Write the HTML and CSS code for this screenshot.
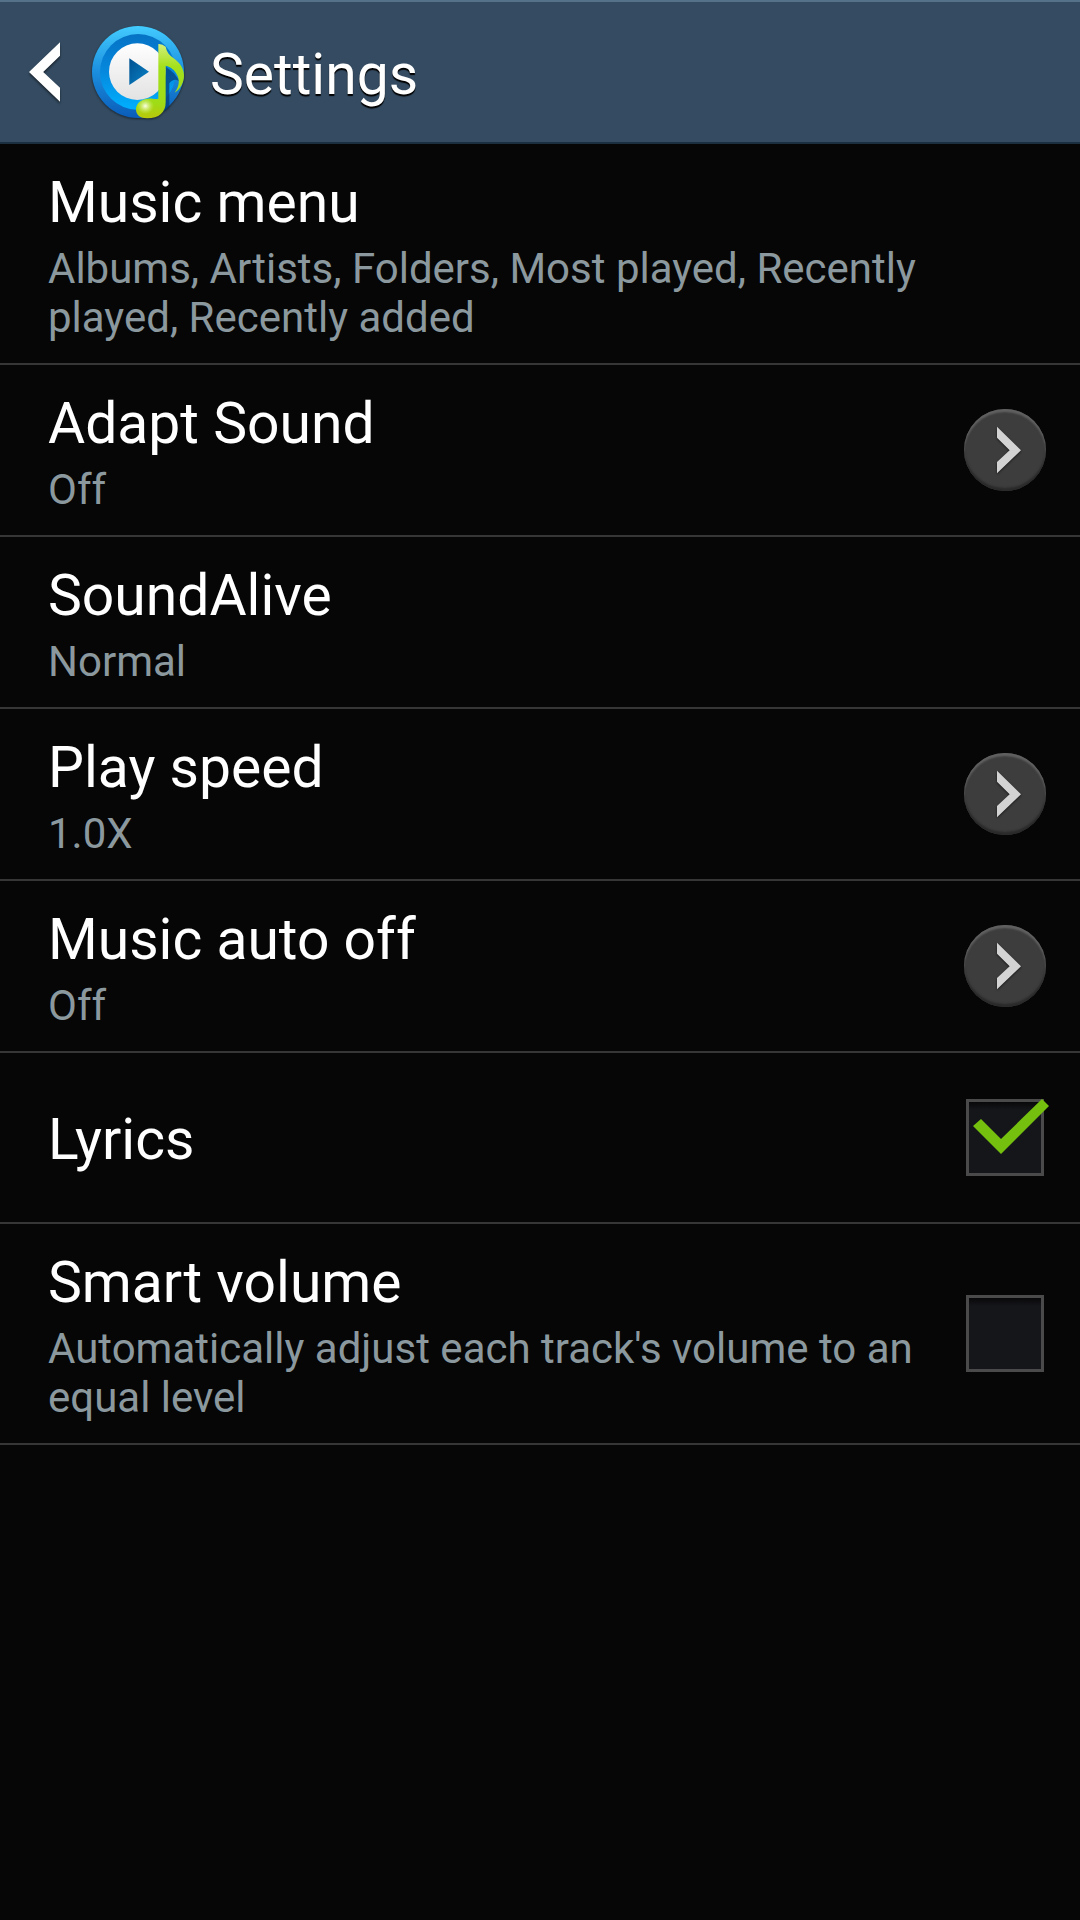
FILE: index.html
```html
<!DOCTYPE html>
<html lang="en">
<head>
    <meta charset="UTF-8">
    <meta name="viewport" content="width=device-width, initial-scale=1.0">
    <title>Settings</title>
    <link rel="stylesheet" href="styles.css">
</head>
<body>
    <svg class="sprite" aria-hidden="true">
        <symbol id="arrow" viewBox="0 0 246 246">
            <path d="M99 53L171 124L99 193V159L137 124L99 86Z"/>
        </symbol>
    </svg>

    <header class="action-bar">
        <a href="#" class="back" aria-label="Back">
            <svg class="back-icon" viewBox="0 0 94 180">
                <path d="M94 0V41L43 90L94 138V180L0 90Z" fill="#fff"/>
            </svg>
        </a>
        <svg class="app-icon" viewBox="0 0 276 279" aria-hidden="true">
            <defs>
                <linearGradient id="rim" x1="0" y1="0" x2="0" y2="1">
                    <stop offset="0" stop-color="#43ccff"/>
                    <stop offset="0.5" stop-color="#1b8ede"/>
                    <stop offset="1" stop-color="#0a5cb8"/>
                </linearGradient>
                <linearGradient id="ring" x1="0" y1="0" x2="0" y2="1">
                    <stop offset="0" stop-color="#0672c4"/>
                    <stop offset="0.5" stop-color="#0589de"/>
                    <stop offset="1" stop-color="#00b0ff"/>
                </linearGradient>
                <linearGradient id="disc" x1="0" y1="0" x2="0" y2="1">
                    <stop offset="0" stop-color="#fff"/>
                    <stop offset="1" stop-color="#e2e2e2"/>
                </linearGradient>
                <linearGradient id="play" x1="0" y1="0" x2="1" y2="1">
                    <stop offset="0" stop-color="#00508f"/>
                    <stop offset="1" stop-color="#0a84c8"/>
                </linearGradient>
                <linearGradient id="note" x1="0" y1="0" x2="0" y2="1">
                    <stop offset="0" stop-color="#d3f07a"/>
                    <stop offset="0.3" stop-color="#a5e01c"/>
                    <stop offset="0.8" stop-color="#9fdc16"/>
                    <stop offset="1" stop-color="#b9c60a"/>
                </linearGradient>
                <radialGradient id="shine">
                    <stop offset="0" stop-color="#fbffe8"/>
                    <stop offset="1" stop-color="#d8ef70" stop-opacity="0"/>
                </radialGradient>
            </defs>
            <circle cx="138" cy="138" r="138" fill="url(#rim)"/>
            <circle cx="138" cy="138" r="114" fill="url(#ring)"/>
            <circle cx="136" cy="137" r="85" fill="url(#disc)"/>
            <path d="M112 97L171 137L112 177Z" fill="url(#play)"/>
            <!-- shadow the note throws on the ring -->
            <path d="M221 122C240 134 254 148 262 166C252 158 240 160 232 172V240C228 248 222 252 214 256Z" fill="#04407c" opacity="0.75"/>
            <path d="M199 54Q211 53 221 62C224 78 232 88 245 97C266 112 276 130 276 149C276 170 264 190 248 200C262 180 264 162 255 146C248 132 236 122 221 119V229C221 260 201 277 166 277C144 277 132 267 132 250C132 230 154 216 181 218Q192 220 199 218Z" fill="url(#note)"/>
            <ellipse cx="160" cy="240" rx="26" ry="24" fill="url(#shine)"/>
        </svg>
        <h1 class="screen-title">Settings</h1>
    </header>

    <main>
        <ul class="settings">
            <li class="row">
                <div class="text">
                    <h2 class="title">Music menu</h2>
                    <p class="summary">Albums, Artists, Folders, Most played, Recently played, Recently added</p>
                </div>
            </li>
            <li class="row">
                <div class="text">
                    <h2 class="title">Adapt Sound</h2>
                    <p class="summary">Off</p>
                </div>
                <button type="button" class="more" aria-label="Adapt Sound options">
                    <svg class="more-icon"><use href="#arrow"/></svg>
                </button>
            </li>
            <li class="row">
                <div class="text">
                    <h2 class="title">SoundAlive</h2>
                    <p class="summary">Normal</p>
                </div>
            </li>
            <li class="row">
                <div class="text">
                    <h2 class="title">Play speed</h2>
                    <p class="summary">1.0X</p>
                </div>
                <button type="button" class="more" aria-label="Play speed options">
                    <svg class="more-icon"><use href="#arrow"/></svg>
                </button>
            </li>
            <li class="row">
                <div class="text">
                    <h2 class="title">Music auto off</h2>
                    <p class="summary">Off</p>
                </div>
                <button type="button" class="more" aria-label="Music auto off options">
                    <svg class="more-icon"><use href="#arrow"/></svg>
                </button>
            </li>
            <li class="row">
                <label class="text" for="lyrics">
                    <span class="title">Lyrics</span>
                </label>
                <input type="checkbox" class="check" id="lyrics" checked>
            </li>
            <li class="row">
                <label class="text" for="smartVolume">
                    <span class="title">Smart volume</span>
                    <span class="summary">Automatically adjust each track's volume to an equal level</span>
                </label>
                <input type="checkbox" class="check" id="smartVolume">
            </li>
        </ul>
    </main>
</body>
</html>
```
FILE: styles.css
```css
* {
    box-sizing: border-box;
}

body {
    margin: 0;
    min-height: 100vh;
    background: #060606;
    color: #fff;
    font-family: Roboto, "Noto Sans", sans-serif;
}

.sprite {
    display: none;
}

/* Action bar */
.action-bar {
    display: flex;
    align-items: center;
    height: 144px;
    padding-left: 29px;
    background: #344b61;
    border-top: 2px solid #55728a;
    border-bottom: 2px solid #1c2f40;
}

.back {
    display: flex;
    margin-right: 32px;
}

.back-icon {
    width: 31px;
    height: 60px;
    filter: drop-shadow(0 2px 1px rgba(0, 0, 0, 0.5));
}

.app-icon {
    width: 92px;
    height: 93px;
    margin-right: 26px;
    filter: drop-shadow(0 1px 1px rgba(0, 0, 0, 0.5));
}

.screen-title {
    margin: 0;
    padding-top: 4px;
    font-size: 57px;
    font-weight: 400;
    line-height: 67px;
    text-shadow: 0 2px 1px #000;
}

/* Settings list */
.settings {
    list-style: none;
    margin: 0;
    padding: 0;
}

.row {
    display: flex;
    align-items: center;
    justify-content: space-between;
    gap: 24px;
    min-height: 171px;
    padding: 0 34px 0 48px;
    border-bottom: 2px solid #363636;
}

.text {
    flex: 1;
    padding: 25px 0 21px;
}

.title {
    display: block;
    margin: 0;
    font-size: 57px;
    font-weight: 400;
    line-height: 67px;
}

.summary {
    display: block;
    margin: 8px 0 0;
    color: #8b999f;
    font-size: 42px;
    line-height: 49px;
}

.more {
    width: 82px;
    height: 82px;
    padding: 0;
    border: none;
    border-radius: 50%;
    background: #3d3d3d;
    box-shadow: inset 0 3px 2px #616161, inset 0 -3px 2px #2a2a2a;
    cursor: pointer;
}

.more-icon {
    display: block;
    width: 82px;
    height: 82px;
    fill: #d3d3d3;
    filter: drop-shadow(0 1px 1px rgba(0, 0, 0, 0.6));
}

.check {
    appearance: none;
    position: relative;
    width: 78px;
    height: 77px;
    margin: 0 2px;
    border: 3px solid #4a4a4a;
    background: linear-gradient(#08080a, #15161a 8px);
    cursor: pointer;
}

/* Tick runs past the right edge of the box */
.check:checked::before {
    content: "";
    position: absolute;
    top: -3px;
    left: 4px;
    width: 76px;
    height: 55px;
    background: #75c00f;
    clip-path: polygon(8px 20px, 28px 40px, 69px 0, 76px 7px, 28px 55px, 0 27px);
}
```
